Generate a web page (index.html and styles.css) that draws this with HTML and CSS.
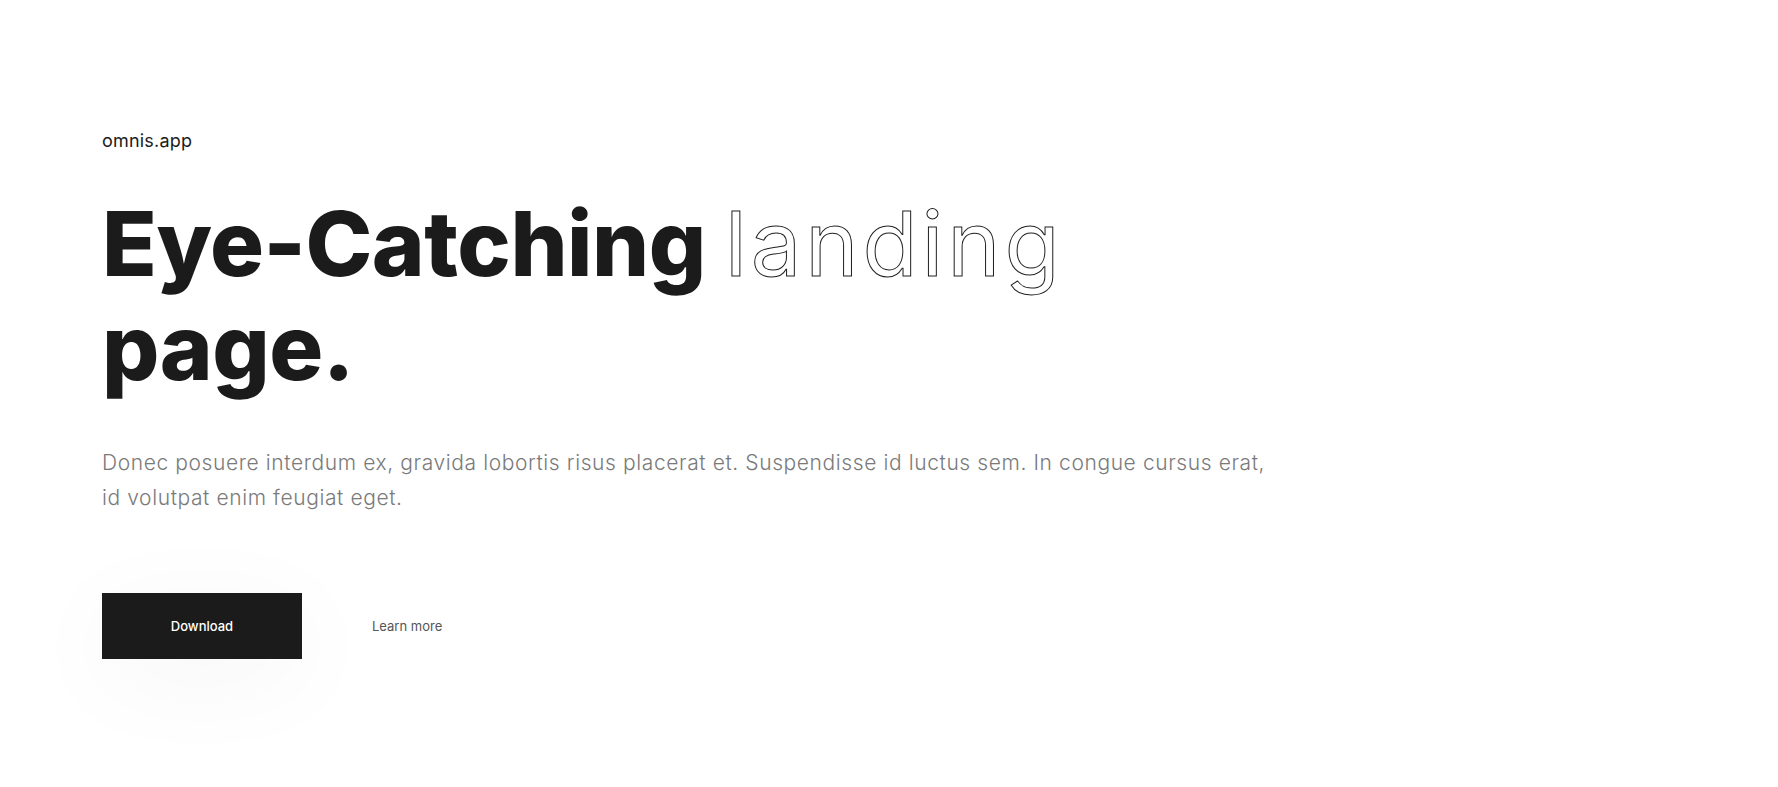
FILE: index.html
```html
<!DOCTYPE html>
<html lang="en">
<head>
<meta charset="utf-8">
<title>omnis.app</title>
<link rel="stylesheet" href="styles.css">
</head>
<body>
<main class="hero">
  <div class="brand">omnis.app</div>
  <h1 class="title"><span class="solid">Eye-Catching</span> <span class="outline">landing</span><br><span class="solid">page.</span></h1>
  <p class="lead">Donec posuere interdum ex, gravida lobortis risus placerat et. Suspendisse id luctus sem. In congue cursus erat, id volutpat enim feugiat eget.</p>
  <div class="actions">
    <a class="btn" href="#">Download</a>
    <a class="link" href="#">Learn more</a>
  </div>
</main>
</body>
</html>
```
FILE: styles.css
```css
html, body {
  margin: 0;
  padding: 0;
  background: #ffffff;
}
body {
  font-family: Inter, "Noto Sans", sans-serif;
  color: #1b1b1b;
  min-height: 787px;
}
.hero {
  padding: 128px 0 0 102px;
  display: flex;
  flex-direction: column;
}
.brand {
  font-size: 18px;
  line-height: 26px;
  letter-spacing: 0.2px;
  color: #1b1b1b;
}
.title {
  margin: 38px 0 0 0;
  font-size: 90px;
  line-height: 104px;
  font-weight: 800;
  letter-spacing: -0.5px;
}
.solid {
  color: #1b1b1b;
}
.outline {
  font-weight: 400;
  letter-spacing: 4px;
  color: #ffffff;
  -webkit-text-stroke: 1px #1b1b1b;
}
.lead {
  margin: 45px 0 0 0;
  max-width: 1180px;
  font-size: 21px;
  line-height: 35px;
  letter-spacing: 0.6px;
  color: #7a7a7a;
  font-weight: 300;
}
.actions {
  margin-top: 78px;
  display: flex;
  align-items: center;
  gap: 70px;
}
.btn {
  width: 200px;
  height: 66px;
  display: flex;
  align-items: center;
  justify-content: center;
  background: #1b1b1b;
  color: #ffffff;
  font-size: 13px;
  font-weight: 500;
  text-decoration: none;
  box-shadow: 0 20px 100px rgba(0, 0, 0, 0.045);
}
.link {
  font-size: 13px;
  color: #555555;
  text-decoration: none;
}
```
